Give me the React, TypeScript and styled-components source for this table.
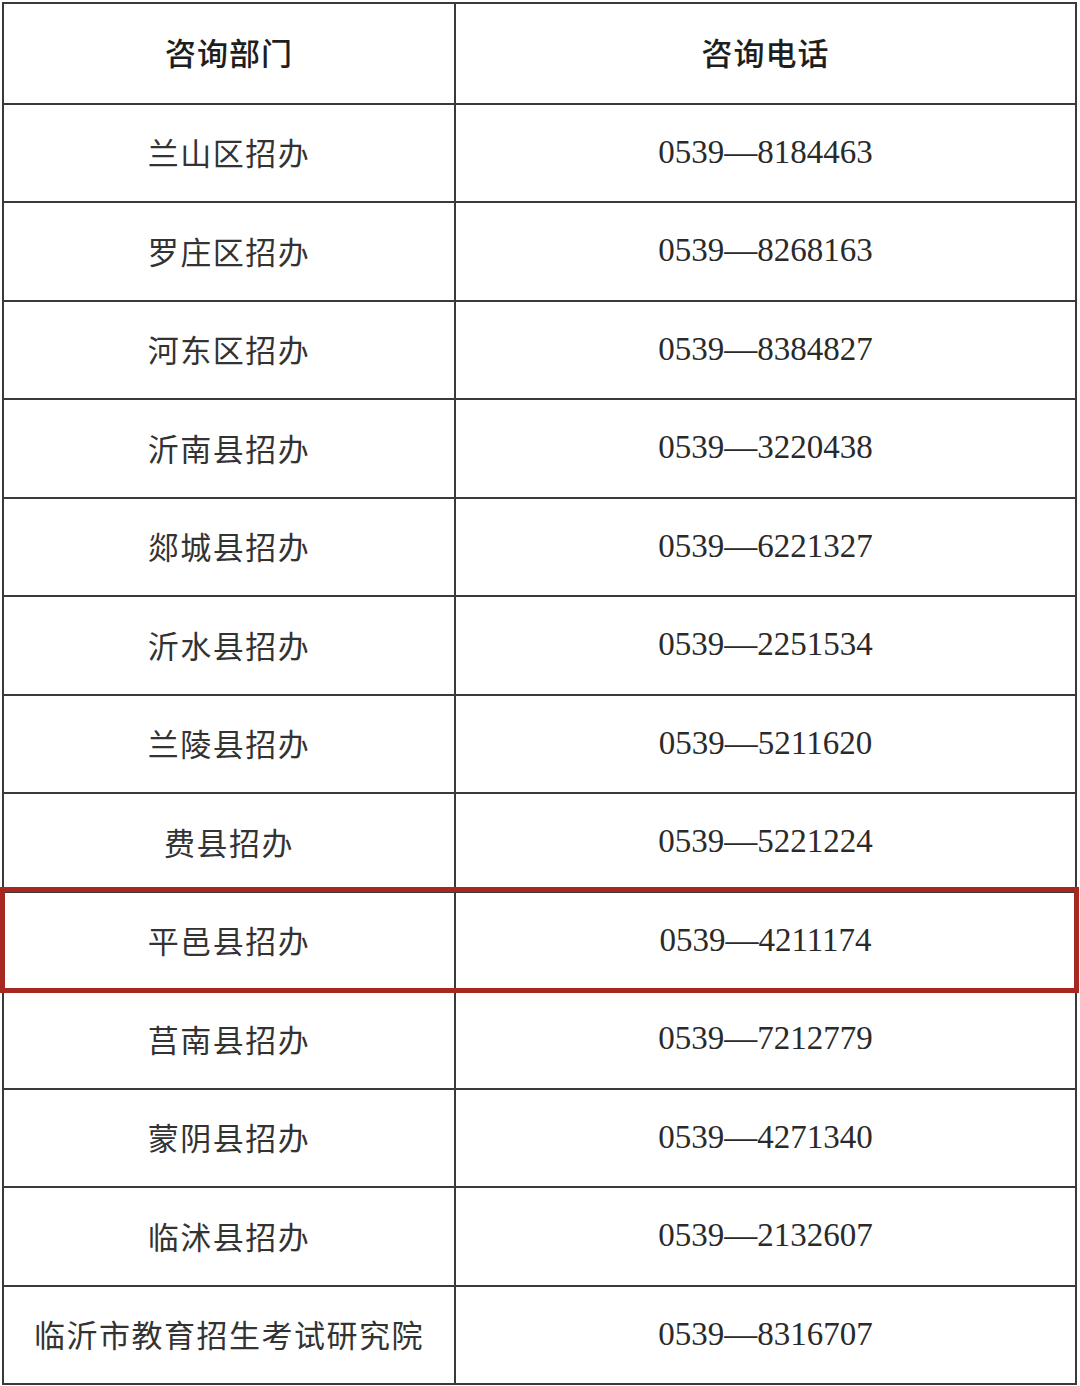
import React from "react";
import styled, { createGlobalStyle } from "styled-components";

const GlobalStyle = createGlobalStyle`
  html, body {
    margin: 0;
    padding: 0;
    background: #ffffff;
  }
`;

const Table = styled.div`
  box-sizing: border-box;
  margin: 2px 0 0 2px;
  width: 1075px;
  height: 1383px;
  border: 2px solid #3a3a3a;
  display: grid;
  grid-template-rows: repeat(14, 1fr);
`;

const Row = styled.div<{ $first?: boolean; $marked?: boolean }>`
  display: grid;
  grid-template-columns: 450px 1fr;
  border-top: ${(p) => (p.$first ? "none" : "2px solid #3a3a3a")};
  outline: ${(p) => (p.$marked ? "5px solid #a62820" : "none")};
  outline-offset: -1px;
  position: ${(p) => (p.$marked ? "relative" : "static")};
  z-index: ${(p) => (p.$marked ? 1 : 0)};
`;

const Cell = styled.div<{ $right?: boolean }>`
  display: flex;
  align-items: center;
  justify-content: center;
  border-left: ${(p) => (p.$right ? "2px solid #3a3a3a" : "none")};
`;

const HeadText = styled.span`
  font-family: "Noto Sans CJK SC", "Liberation Sans", sans-serif;
  font-weight: 500;
  font-size: 31px;
  color: #1e1e1e;
  letter-spacing: 1px;
  margin-top: -4px;
`;

const Dept = styled.span`
  font-family: "Noto Sans CJK SC", "Liberation Serif", serif;
  font-weight: 400;
  font-size: 31px;
  color: #333;
  letter-spacing: 1.5px;
  margin-top: -2px;
`;

const Phone = styled.span`
  font-family: "Liberation Serif", "Times New Roman", serif;
  font-size: 33px;
  color: #2a2a2a;
  margin-top: -1px;
`;

const rows: [string, string][] = [
  ["兰山区招办", "0539—8184463"],
  ["罗庄区招办", "0539—8268163"],
  ["河东区招办", "0539—8384827"],
  ["沂南县招办", "0539—3220438"],
  ["郯城县招办", "0539—6221327"],
  ["沂水县招办", "0539—2251534"],
  ["兰陵县招办", "0539—5211620"],
  ["费县招办", "0539—5221224"],
  ["平邑县招办", "0539—4211174"],
  ["莒南县招办", "0539—7212779"],
  ["蒙阴县招办", "0539—4271340"],
  ["临沭县招办", "0539—2132607"],
  ["临沂市教育招生考试研究院", "0539—8316707"],
];

const App: React.FC = () => {
  return (
    <>
      <GlobalStyle />
      <Table>
        <Row $first>
          <Cell>
            <HeadText>咨询部门</HeadText>
          </Cell>
          <Cell $right>
            <HeadText>咨询电话</HeadText>
          </Cell>
        </Row>
        {rows.map(([dept, phone]) => (
          <Row key={dept} $marked={dept === "平邑县招办"}>
            <Cell>
              <Dept>{dept}</Dept>
            </Cell>
            <Cell $right>
              <Phone>{phone}</Phone>
            </Cell>
          </Row>
        ))}
      </Table>
    </>
  );
};

export default App;
